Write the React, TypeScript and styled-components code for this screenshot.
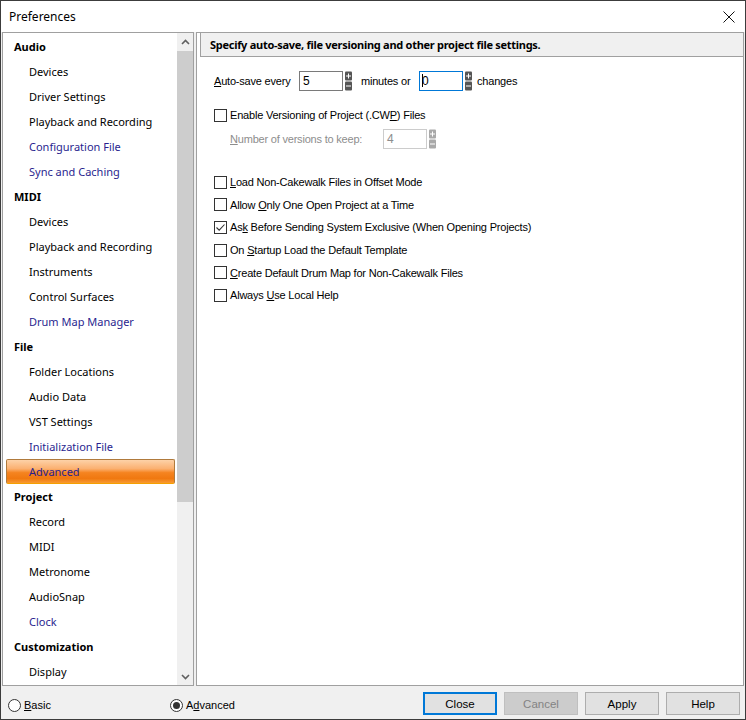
import styled, {createGlobalStyle} from 'styled-components';

const GlobalStyle = createGlobalStyle`
    html, body {
        margin: 0;
        padding: 0;
        background: #ffffff;
    }
    body {
        width: 746px;
        height: 720px;
        overflow: hidden;
    }
`

const Window = styled.div`
    width: 746px;
    height: 720px;
    box-sizing: border-box;
    border: 1px solid #3c3c3c;
    background: #f0f0f0;
    display: flex;
    flex-direction: column;
    font-family: "Liberation Sans", Arial, sans-serif;
    font-size: 11px;
    color: #000;
`
const TitleBar = styled.div`
    height: 31px;
    flex: none;
    background: #ffffff;
    display: flex;
    align-items: center;
    justify-content: space-between;
    padding-left: 8px;
    font-family: "Noto Sans", sans-serif;
    font-size: 12px;
`
const CloseBox = styled.div`
    width: 32px;
    height: 31px;
    display: flex;
    align-items: center;
    justify-content: center;
`
const Body = styled.div`
    flex: 1;
    min-height: 0;
    display: flex;
    gap: 2px;
    padding: 0 1px;
`

/* ---- left tree ---- */
const TreePanel = styled.div`
    width: 192px;
    flex: none;
    box-sizing: border-box;
    border: 1px solid #a0a0a0;
    background: #ffffff;
    display: flex;
    overflow: hidden;
`
const Tree = styled.div`
    flex: 1;
    padding-top: 1px;
    overflow: hidden;
    font-family: "Noto Sans", sans-serif;
    font-size: 11px;
`
const TreeRow = styled.div<{header?: boolean; visited?: boolean}>`
    height: 25px;
    box-sizing: border-box;
    display: flex;
    align-items: center;
    padding-left: ${({header}) => header ? '11px' : '26px'};
    font-weight: ${({header}) => header ? 700 : 400};
    color: ${({visited}) => visited ? '#2a1f8f' : '#000'};
    white-space: nowrap;
`
const SelectedRow = styled(TreeRow)`
    margin: 0 2px 0 3px;
    padding-left: 22px;
    border: 1px solid #b07a3c;
    border-bottom-color: #f5a000;
    border-radius: 2px;
    background: linear-gradient(to bottom, #fdd2a8 0%, #fbb070 38%, #f58420 55%, #f07810 80%, #f79a30 100%);
    color: #2a1f8f;
`
const ScrollBar = styled.div`
    width: 16px;
    flex: none;
    background: #f0f0f0;
    display: flex;
    flex-direction: column;
`
const ScrollArrow = styled.div`
    height: 17px;
    flex: none;
    display: flex;
    align-items: center;
    justify-content: center;
`
const Thumb = styled.div`
    flex: none;
    margin: 1px 0 0 0;
    background: #cdcdcd;
`

/* ---- right page ---- */
const Page = styled.div`
    flex: 1;
    box-sizing: border-box;
    border: 1px solid #a0a0a0;
    background: #ffffff;
    display: flex;
    flex-direction: column;
`
const PageHeader = styled.div`
    height: 24px;
    margin-left: 3px;
    box-sizing: border-box;
    border-left: 1px solid #a0a0a0;
    border-bottom: 1px solid #a0a0a0;
    background: #f0f0f0;
    display: flex;
    align-items: center;
    padding-left: 9px;
    font-family: "Noto Sans", sans-serif;
    font-weight: 700;
    font-size: 11px;
    letter-spacing: -0.28px;
`
const Content = styled.div`
    display: flex;
    flex-direction: column;
    padding: 13px 0 0 17px;
    letter-spacing: -0.2px;
`
const FieldRow = styled.div<{indent?: number; top?: number}>`
    display: flex;
    align-items: center;
    height: 21px;
    padding-left: ${({indent}) => indent ?? 0}px;
    margin-top: ${({top}) => top ?? 0}px;
`
const Label = styled.span<{w?: number; gap?: number; disabled?: boolean}>`
    width: ${({w}) => w ? `${w}px` : 'auto'};
    margin-left: ${({gap}) => gap ?? 0}px;
    color: ${({disabled}) => disabled ? '#8d8d8d' : '#000'};
    white-space: nowrap;
`
const NumBox = styled.div<{focused?: boolean; disabled?: boolean}>`
    width: 44px;
    height: 20px;
    box-sizing: border-box;
    border: 1px solid ${({focused, disabled}) => focused ? '#0078d7' : disabled ? '#cccccc' : '#7a7a7a'};
    background: #ffffff;
    color: ${({disabled}) => disabled ? '#8d8d8d' : '#000'};
    display: flex;
    align-items: center;
    padding-left: ${({focused}) => focused ? '2px' : '3px'};
    font-size: 12px;
`
const Caret = styled.span`
    display: inline-block;
    width: 1px;
    height: 13px;
    background: #000;
    margin-right: -1px;
`
const CheckGroup = styled.div`
    display: flex;
    flex-direction: column;
    margin-top: 22px;
`
const CheckRow = styled.label<{h?: number}>`
    display: flex;
    align-items: center;
    height: ${({h}) => h ?? 22.6}px;
    gap: 3px;
    white-space: nowrap;
`
const Box = styled.span`
    width: 13px;
    height: 13px;
    box-sizing: border-box;
    border: 1px solid #333333;
    background: #ffffff;
    display: flex;
    align-items: center;
    justify-content: center;
    flex: none;
`

/* ---- bottom bar ---- */
const BottomBar = styled.div`
    height: 33px;
    flex: none;
    display: flex;
    align-items: center;
    padding: 2px 5px 0 7px;
    box-sizing: border-box;
`
const RadioOption = styled.label<{w?: number}>`
    display: flex;
    align-items: center;
    gap: 3px;
    width: ${({w}) => w ? `${w}px` : 'auto'};
    flex: none;
    padding-top: 3px;
`
const RadioDot = styled.span<{on?: boolean}>`
    width: 13px;
    height: 13px;
    box-sizing: border-box;
    border-radius: 50%;
    border: 1px solid #333333;
    background: #ffffff;
    display: flex;
    align-items: center;
    justify-content: center;
    &::after {
        content: '';
        width: 7px;
        height: 7px;
        border-radius: 50%;
        background: #333333;
        display: ${({on}) => on ? 'block' : 'none'};
    }
`
const Buttons = styled.div`
    margin-left: auto;
    display: flex;
    gap: 7px;
`
const Button = styled.button<{primary?: boolean}>`
    width: 74px;
    height: 23px;
    box-sizing: border-box;
    border: ${({primary}) => primary ? '2px solid #0078d7' : '1px solid #adadad'};
    background: #e1e1e1;
    font-family: "Liberation Sans", Arial, sans-serif;
    font-size: 11.5px;
    color: #000;
    padding: 0;
    &:disabled {
        background: #cccccc;
        border-color: #bfbfbf;
        color: #838383;
    }
`

const tree: {label: string; header?: boolean; visited?: boolean; selected?: boolean}[] = [
    {label: 'Audio', header: true},
    {label: 'Devices'},
    {label: 'Driver Settings'},
    {label: 'Playback and Recording'},
    {label: 'Configuration File', visited: true},
    {label: 'Sync and Caching', visited: true},
    {label: 'MIDI', header: true},
    {label: 'Devices'},
    {label: 'Playback and Recording'},
    {label: 'Instruments'},
    {label: 'Control Surfaces'},
    {label: 'Drum Map Manager', visited: true},
    {label: 'File', header: true},
    {label: 'Folder Locations'},
    {label: 'Audio Data'},
    {label: 'VST Settings'},
    {label: 'Initialization File', visited: true},
    {label: 'Advanced', selected: true},
    {label: 'Project', header: true},
    {label: 'Record'},
    {label: 'MIDI'},
    {label: 'Metronome'},
    {label: 'AudioSnap'},
    {label: 'Clock', visited: true},
    {label: 'Customization', header: true},
    {label: 'Display'},
];

const Spinner = ({disabled}: {disabled?: boolean}) => {
    const c = disabled ? '#a9a9a9' : '#555555';
    return (
        <svg width="7" height="20" viewBox="0 0 7 20" style={{marginLeft: 2, flex: 'none'}}>
            <rect x="0" y="0.5" width="7" height="9" rx="1" fill={c}/>
            <path d="M1 5 H6 M3.5 2.5 V7.5" stroke="#fff" strokeWidth="1"/>
            <rect x="0" y="10.5" width="7" height="9" rx="1" fill={c}/>
            <path d="M1 15 H6" stroke="#fff" strokeWidth="1"/>
        </svg>
    );
};

const Check = ({checked}: {checked?: boolean}) => (
    <Box>
        {checked && (
            <svg width="11" height="11" viewBox="0 0 11 11">
                <path d="M1.5 5.5 L4.2 8.2 L9.5 2.5" stroke="#333" strokeWidth="1.1" fill="none"/>
            </svg>
        )}
    </Box>
);

const Chevron = ({down}: {down?: boolean}) => (
    <svg width="9" height="6" viewBox="0 0 9 6">
        <path d={down ? 'M1 1 L4.5 4.5 L8 1' : 'M1 5 L4.5 1.5 L8 5'} stroke="#606060" strokeWidth="1.6" fill="none"/>
    </svg>
);

const App = () => {
    return (
        <>
            <GlobalStyle/>
            <Window>
                <TitleBar>
                    <span>Preferences</span>
                    <CloseBox>
                        <svg width="12" height="12" viewBox="0 0 12 12">
                            <path d="M0.5 0.5 L11.5 11.5 M11.5 0.5 L0.5 11.5" stroke="#111" strokeWidth="1"/>
                        </svg>
                    </CloseBox>
                </TitleBar>
                <Body>
                    <TreePanel>
                        <Tree>
                            {tree.map((item, i) => item.selected
                                ? <SelectedRow key={i}>{item.label}</SelectedRow>
                                : <TreeRow key={i} header={item.header} visited={item.visited}>{item.label}</TreeRow>
                            )}
                        </Tree>
                        <ScrollBar>
                            <ScrollArrow><Chevron/></ScrollArrow>
                            <Thumb style={{height: 451}}/>
                            <div style={{flex: 1}}/>
                            <ScrollArrow><Chevron down/></ScrollArrow>
                        </ScrollBar>
                    </TreePanel>
                    <Page>
                        <PageHeader>Specify auto-save, file versioning and other project file settings.</PageHeader>
                        <Content>
                            <FieldRow>
                                <Label w={85}><u>A</u>uto-save every</Label>
                                <NumBox>5</NumBox>
                                <Spinner/>
                                <Label w={58} gap={9}>minutes or</Label>
                                <NumBox focused><Caret/>0</NumBox>
                                <Spinner/>
                                <Label gap={5}>changes</Label>
                            </FieldRow>
                            <CheckRow h={20} style={{marginTop: 14}}>
                                <Check/>
                                <span>Enable Versioning of Project (.CW<u>P</u>) Files</span>
                            </CheckRow>
                            <FieldRow indent={16} top={3}>
                                <Label w={153} disabled><u>N</u>umber of versions to keep:</Label>
                                <NumBox disabled>4</NumBox>
                                <Spinner disabled/>
                            </FieldRow>
                            <CheckGroup>
                                <CheckRow><Check/><span><u>L</u>oad Non-Cakewalk Files in Offset Mode</span></CheckRow>
                                <CheckRow><Check/><span>Allow <u>O</u>nly One Open Project at a Time</span></CheckRow>
                                <CheckRow><Check checked/><span>As<u>k</u> Before Sending System Exclusive (When Opening Projects)</span></CheckRow>
                                <CheckRow><Check/><span>On <u>S</u>tartup Load the Default Template</span></CheckRow>
                                <CheckRow><Check/><span><u>C</u>reate Default Drum Map for Non-Cakewalk Files</span></CheckRow>
                                <CheckRow><Check/><span>Always <u>U</u>se Local Help</span></CheckRow>
                            </CheckGroup>
                        </Content>
                    </Page>
                </Body>
                <BottomBar>
                    <RadioOption w={162}><RadioDot/><span><u>B</u>asic</span></RadioOption>
                    <RadioOption><RadioDot on/><span>A<u>d</u>vanced</span></RadioOption>
                    <Buttons>
                        <Button primary>Close</Button>
                        <Button disabled>Cancel</Button>
                        <Button>Apply</Button>
                        <Button>Help</Button>
                    </Buttons>
                </BottomBar>
            </Window>
        </>
    );
};

export default App;
